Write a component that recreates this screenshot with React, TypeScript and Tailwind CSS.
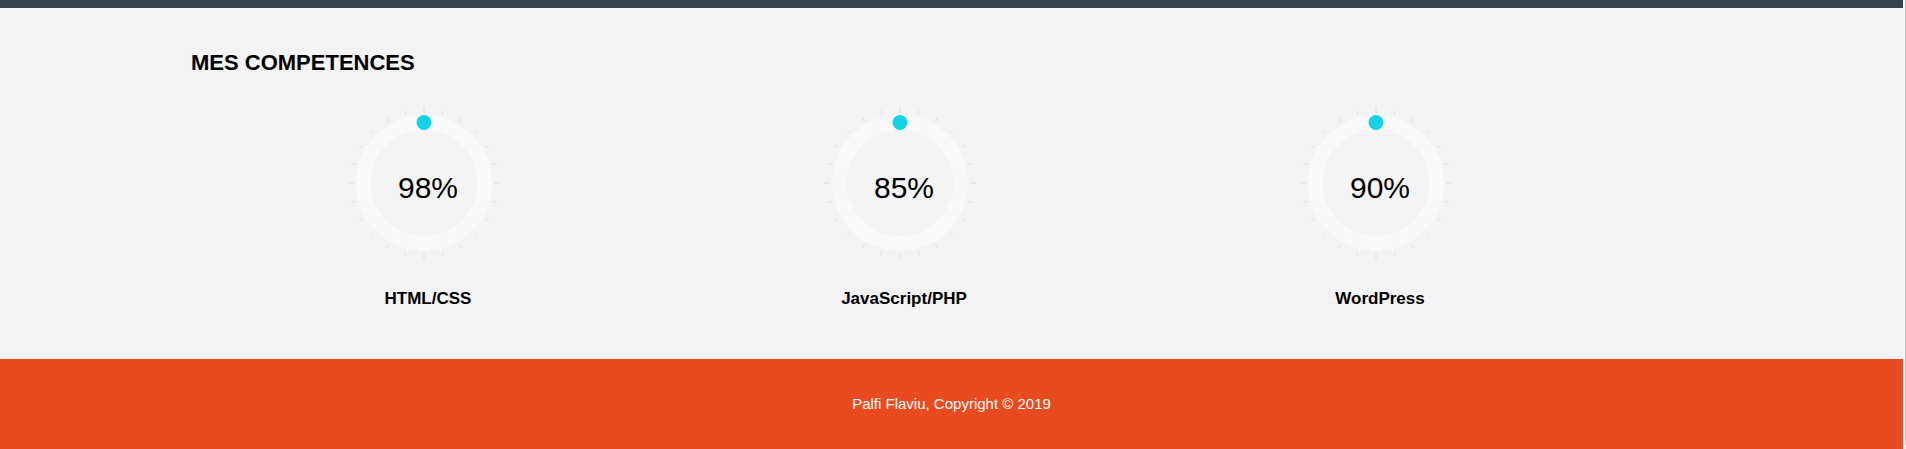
const skills = [
  { label: "HTML/CSS", value: 98 },
  { label: "JavaScript/PHP", value: 85 },
  { label: "WordPress", value: 90 },
];

function Gauge({ value }: { value: number }) {
  const ticks = Array.from({ length: 24 }, (_, i) => i * 15);
  return (
    <div className="relative mr-[8px] h-[152px] w-[152px]">
      <svg width="152" height="152" viewBox="0 0 152 152">
        {ticks.map((deg) => {
          const major = deg % 90 === 0;
          const a = (deg * Math.PI) / 180;
          const r1 = major ? 70 : 71;
          const r2 = major ? 76 : 75;
          return (
            <line
              key={deg}
              x1={76 + r1 * Math.sin(a)}
              y1={76 - r1 * Math.cos(a)}
              x2={76 + r2 * Math.sin(a)}
              y2={76 - r2 * Math.cos(a)}
              stroke="#dddddd"
              strokeWidth="1"
            />
          );
        })}
        <circle cx="76" cy="76" r="60.5" fill="none" stroke="#f9f9f9" strokeWidth="15" />
        <circle cx="76" cy="15.5" r="7.5" fill="#16d2e6" />
      </svg>
      <div className="absolute inset-0 flex items-center justify-center pl-[8px] pt-[10px] text-[30px] leading-[30px] text-black">
        {value}%
      </div>
    </div>
  );
}

export default function App() {
  return (
    <div className="flex h-[449px] w-full font-['Liberation_Sans',Arial,sans-serif]">
      <div className="flex w-[1903px] flex-col bg-[#f3f3f3]">
        <div className="h-[8px] bg-[#37424a]" />
        <section className="pb-[50px] pt-[44px]">
          <div className="pl-[190px]">
            <h2 className="pl-[1px] text-[22px] font-bold leading-[22px] text-black">MES COMPETENCES</h2>
            <div className="mt-[33px] grid grid-cols-[476px_476px_476px]">
              {skills.map((s) => (
                <div key={s.label} className="flex flex-col items-center">
                  <Gauge value={s.value} />
                  <p className="mt-[30px] text-[17px] font-bold leading-[20px] text-black">{s.label}</p>
                </div>
              ))}
            </div>
          </div>
        </section>
        <footer className="flex flex-1 items-center justify-center bg-[#e84b1f]">
          <p className="text-[15px] text-white">Palfi Flaviu, Copyright © 2019</p>
        </footer>
      </div>
      <div className="flex w-[3px] flex-col bg-[#f6f6f6]">
        <div className="ml-[2px] h-[445px] w-[1px] bg-[#c6c6c6]" />
      </div>
    </div>
  );
}
